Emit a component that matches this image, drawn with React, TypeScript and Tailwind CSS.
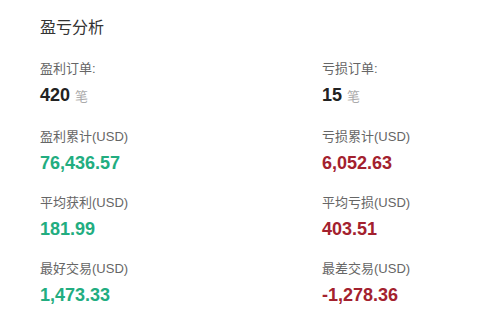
import React from "react";

type Stat = {
  label: string;
  value: string;
  unit?: string;
  tone: "plain" | "win" | "loss";
};

const stats: Stat[] = [
  { label: "盈利订单:", value: "420", unit: "笔", tone: "plain" },
  { label: "亏损订单:", value: "15", unit: "笔", tone: "plain" },
  { label: "盈利累计(USD)", value: "76,436.57", tone: "win" },
  { label: "亏损累计(USD)", value: "6,052.63", tone: "loss" },
  { label: "平均获利(USD)", value: "181.99", tone: "win" },
  { label: "平均亏损(USD)", value: "403.51", tone: "loss" },
  { label: "最好交易(USD)", value: "1,473.33", tone: "win" },
  { label: "最差交易(USD)", value: "-1,278.36", tone: "loss" },
];

const toneClass = {
  plain: "text-[#222222]",
  win: "text-[#22ad80]",
  loss: "text-[#a3212e]",
};

export default function App() {
  return (
    <div
      className="h-[313px] w-[487px] bg-white pl-10 pt-[16px]"
      style={{ fontFamily: '"Liberation Sans", "Noto Sans CJK SC", sans-serif' }}
    >
      <h2 className="text-[16px] leading-[24px] text-[#333333]">盈亏分析</h2>

      <div className="mt-[20px] grid grid-cols-[282px_1fr] gap-y-[20px]">
        {stats.map((s) => (
          <div key={s.label} className="flex flex-col">
            <div className="text-[13px] leading-[18px] text-[#666666]">{s.label}</div>
            <div className="mt-[6px] flex items-baseline leading-[22px]">
              <span className={`text-[18px] font-bold ${toneClass[s.tone]}`}>{s.value}</span>
              {s.unit && <span className="ml-[5px] text-[13px] text-[#aaaaaa]">{s.unit}</span>}
            </div>
          </div>
        ))}
      </div>
    </div>
  );
}
